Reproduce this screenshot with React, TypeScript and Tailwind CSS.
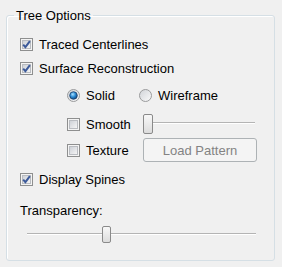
import React from "react";

const font = { fontFamily: '"Liberation Sans", Arial, sans-serif' };

function CheckBox({ checked }: { checked?: boolean }) {
  return (
    <svg width="13" height="13" viewBox="0 0 13 13" className="shrink-0">
      <defs>
        <linearGradient id="cbIn" x1="0" y1="0" x2="1" y2="1">
          <stop offset="0" stopColor="#cbcfd5" />
          <stop offset="1" stopColor="#f7f7f7" />
        </linearGradient>
      </defs>
      <rect x="0.5" y="0.5" width="12" height="12" fill="#f4f4f4" stroke="#8e8f8f" />
      <rect x="2.5" y="2.5" width="8" height="8" fill="url(#cbIn)" stroke="#b9bcc1" />
      {checked && (
        <path d="M3.2 6.6 L5.4 9.2 L9.9 3.2" fill="none" stroke="#3c5a9a" strokeWidth="2" />
      )}
    </svg>
  );
}

function Radio({ checked }: { checked?: boolean }) {
  return (
    <svg width="13" height="13" viewBox="0 0 13 13" className="shrink-0">
      <defs>
        <linearGradient id="rdOut" x1="0" y1="0" x2="1" y2="1">
          <stop offset="0" stopColor="#d0d3d7" />
          <stop offset="1" stopColor="#fbfbfb" />
        </linearGradient>
        <radialGradient id="rdDot" cx="0.4" cy="0.35" r="0.7">
          <stop offset="0" stopColor="#a9e0ff" />
          <stop offset="0.5" stopColor="#2a8ad4" />
          <stop offset="1" stopColor="#0b3f7a" />
        </radialGradient>
      </defs>
      <circle cx="6.5" cy="6.5" r="6" fill="url(#rdOut)" stroke="#9a9b9c" />
      {checked && <circle cx="6.5" cy="6.5" r="3.8" fill="url(#rdDot)" stroke="#1d3e68" strokeWidth="0.8" />}
    </svg>
  );
}

function Thumb({ tall }: { tall?: boolean }) {
  return (
    <div
      className={`shrink-0 rounded-[2px] border border-[#8a8a8a] bg-gradient-to-b from-[#f8f8f8] to-[#dcdcdc] ${
        tall ? "w-[10px] h-[20px]" : "w-[9px] h-[17px]"
      }`}
    />
  );
}

function Track({ className }: { className: string }) {
  return <div className={`h-[2px] border-t border-[#b4b4b4] border-b border-b-white ${className}`} />;
}

export default function App() {
  return (
    <div className="w-[282px] h-[267px] bg-[#f0f0f0] pt-[8px] px-[6px] text-[13px] text-black" style={font}>
      <fieldset className="h-[253px] w-[269px] rounded-[3px] border border-[#d5dfe5] shadow-[inset_1px_1px_0_#ffffff]">
        <legend className="ml-[7px] px-[2px] leading-[15px]">Tree Options</legend>
        <div className="flex flex-col pl-[13px] leading-[15px]">
          <label className="mt-[11px] h-[20px] flex items-center gap-[6px]">
            <CheckBox checked />
            <span>Traced Centerlines</span>
          </label>
          <label className="mt-[4px] h-[20px] flex items-center gap-[6px]">
            <CheckBox checked />
            <span>Surface Reconstruction</span>
          </label>
          <div className="mt-[7px] h-[20px] flex items-center pl-[47px]">
            <div className="w-[72px] flex items-center gap-[6px]">
              <Radio checked />
              <span>Solid</span>
            </div>
            <div className="flex items-center gap-[6px]">
              <Radio />
              <span>Wireframe</span>
            </div>
          </div>
          <div className="mt-[9px] h-[20px] flex items-center pl-[47px]">
            <div className="w-[76px] flex items-center gap-[6px]">
              <CheckBox />
              <span>Smooth</span>
            </div>
            <div className="flex items-center">
              <Thumb tall />
              <Track className="w-[102px] -mt-[3px]" />
            </div>
          </div>
          <div className="mt-[4px] h-[24px] flex items-center pl-[47px]">
            <div className="w-[76px] flex items-center gap-[6px]">
              <CheckBox />
              <span>Texture</span>
            </div>
            <button className="w-[114px] h-[24px] rounded-[3px] border border-[#adb2b5] bg-[#f4f4f4] text-[#838383]">
              Load Pattern
            </button>
          </div>
          <label className="mt-[7px] h-[20px] flex items-center gap-[6px]">
            <CheckBox checked />
            <span>Display Spines</span>
          </label>
          <div className="mt-[11px] h-[20px] flex items-center">Transparency:</div>
          <div className="mt-[4px] h-[20px] flex items-center pl-[7px]">
            <Track className="w-[75px]" />
            <Thumb />
            <Track className="w-[145px]" />
          </div>
        </div>
      </fieldset>
    </div>
  );
}
